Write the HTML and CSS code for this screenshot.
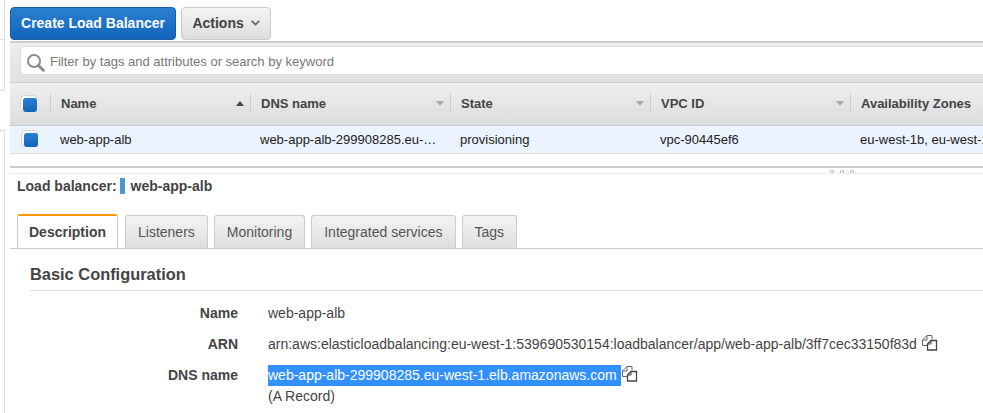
FILE: index.html
```html
<!DOCTYPE html>
<html lang="en">
<head>
<meta charset="utf-8">
<title>Load Balancers</title>
<link rel="stylesheet" href="styles.css">
</head>
<body>
<div class="page">
  <aside class="rail">
    <div class="rail-a"></div>
    <div class="rail-b"></div>
    <div class="rail-gap"></div>
    <div class="rail-c"></div>
  </aside>
  <main class="main">
    <div class="toolbar">
      <button class="btn btn-primary">Create Load Balancer</button>
      <button class="btn btn-default">Actions
        <svg class="chev" width="9" height="6" viewBox="0 0 9 6"><path d="M.7 .8 4.5 4.6 8.3 .8" fill="none" stroke="#666" stroke-width="1.7"/></svg>
      </button>
    </div>
    <div class="filterbar">
      <div class="filter">
        <svg class="search" width="18" height="18" viewBox="0 0 18 18"><circle cx="7" cy="7" r="6" fill="none" stroke="#8c8c8c" stroke-width="2"/><path d="M11.5 11.5 16.3 16.3" stroke="#8c8c8c" stroke-width="3" stroke-linecap="round"/></svg>
        <span>Filter by tags and attributes or search by keyword</span>
      </div>
    </div>
    <div class="grid head">
      <div class="chk-cell"><span class="chk"></span></div>
      <div class="th"><span>Name</span><i class="arrow up"></i></div>
      <div class="th"><span>DNS name</span><i class="arrow"></i></div>
      <div class="th"><span>State</span><i class="arrow"></i></div>
      <div class="th"><span>VPC ID</span><i class="arrow"></i></div>
      <div class="th"><span>Availability Zones</span></div>
    </div>
    <div class="grid row">
      <div class="chk-cell"><span class="chk chk-row"></span></div>
      <div class="td">web-app-alb</div>
      <div class="td">web-app-alb-299908285.eu-…</div>
      <div class="td">provisioning</div>
      <div class="td">vpc-90445ef6</div>
      <div class="td">eu-west-1b, eu-west-1a</div>
    </div>
    <div class="splitter"><div class="dots"><i></i><i></i><i></i></div></div>
    <div class="lb-title">Load balancer: <i class="swatch"></i> <span>web-app-alb</span></div>
    <div class="tabs">
      <div class="tab active">Description</div>
      <div class="tab">Listeners</div>
      <div class="tab">Monitoring</div>
      <div class="tab">Integrated services</div>
      <div class="tab">Tags</div>
    </div>
    <section class="details">
      <h2>Basic Configuration</h2>
      <dl>
        <dt>Name</dt>
        <dd>web-app-alb</dd>
        <dt>ARN</dt>
        <dd>arn:aws:elasticloadbalancing:eu-west-1:539690530154:loadbalancer/app/web-app-alb/3ff7cec33150f83d <svg class="copy" width="17" height="17" viewBox="0 0 17 17"><use href="#copy-icon"/></svg></dd>
        <dt>DNS name</dt>
        <dd><span class="sel">web-app-alb-299908285.eu-west-1.elb.amazonaws.com </span><svg class="copy" width="17" height="17" viewBox="0 0 17 17"><use href="#copy-icon"/></svg><br>(A Record)</dd>
      </dl>
    </section>
  </main>
</div>
<svg class="defs" width="0" height="0"><defs><g id="copy-icon" fill="none"><path d="M7.5 11.5H1.5V6L6 1.5H11V5.5" stroke="#666"/><path d="M6 1.5V6H1.5" stroke="#666"/><path d="M10 6.5H15.5V16H6.5V10Z" fill="#fff" stroke="#444" stroke-width="1.3"/><path d="M10 6.5V10H6.5" stroke="#444"/></g></defs></svg>
</body>
</html>
```
FILE: styles.css
```css
* { box-sizing: border-box; }
html, body { margin: 0; height: 413px; overflow: hidden; background: #fff; }
body { font-family: "Liberation Sans", Arial, sans-serif; font-size: 13px; color: #444; }
.page { display: flex; width: 983px; height: 413px; overflow: hidden; }
.rail { flex: 0 0 10px; width: 10px; }
.rail-a { height: 40px; width: 5px; border-right: 1px solid #ddd; border-bottom: 1px solid #ddd; }
.rail-b { height: 51px; width: 5px; border-right: 1px solid #ddd; border-bottom: 1px solid #ddd; }
.rail-gap { height: 39px; }
.rail-c { height: 283px; width: 5px; border-right: 1px solid #ddd; border-top: 1px solid #ddd; }
.main { flex: 1 1 auto; min-width: 0; }

.toolbar { display: flex; gap: 5px; height: 41px; padding-top: 7px; }
.btn { height: 33px; padding: 0 0 2px; font: bold 14px "Liberation Sans", Arial, sans-serif; border-radius: 4px; }
.btn-primary { width: 166px; color: #fff; background: linear-gradient(#2a7fd3, #1166bb); border: 1px solid #1a5da3; }
.btn-default { width: 90px; color: #444; background: linear-gradient(#f3f3f3, #dedede); border: 1px solid #ccc; }
.chev { margin-left: 3px; vertical-align: 2px; }

.filterbar { height: 42px; padding: 3px 0 8px 10px; background: linear-gradient(#eee, #e0e0e0); border-top: 2px solid #ccc; border-bottom: 1px solid #ccc; }
.filter { height: 29px; display: flex; align-items: center; gap: 5px; padding: 1px 0 0 6px; background: #fff; border: 1px solid #ddd; border-right: 0; border-radius: 4px 0 0 4px; color: #777; font-size: 13px; }
.search { margin-top: 3px; }

.grid { display: grid; grid-template-columns: 40px 200px 200px 200px 200px 1fr; }
.head { height: 43px; align-items: center; padding-bottom: 2px; background: linear-gradient(#efefef, #dcdcdc); border-bottom: 1px solid #ccc; }
.row { height: 28px; align-items: center; background: #eaf3fe; border-bottom: 1px solid #ddd; color: #222; }
.chk-cell { padding-left: 10px; display: flex; }
.chk { display: block; width: 17px; height: 17px; padding: 1px; border: 1px solid #d4d4d4; border-radius: 4px; background: #f8f8f8; }
.chk::before { content: ""; display: block; width: 14px; height: 14px; margin: 1px 0 0 1px; border-radius: 3px; background: linear-gradient(#2a7fd3, #1166bb); }
.chk-row { margin: 0 0 2px 1px; }
.th { height: 18px; display: flex; align-items: center; justify-content: space-between; padding: 0 6px 0 10px; border-left: 1px solid #ccc; font-weight: bold; font-size: 13px; color: #444; }
.td { padding-left: 10px; font-size: 13px; white-space: nowrap; }
.arrow { width: 0; height: 0; border: 4px solid transparent; border-top: 5px solid #aaa; border-bottom: 0; }
.arrow.up { border-top: 0; border-bottom: 5px solid #444; }

.splitter { position: relative; height: 12px; margin-top: 12px; border-top: 2px solid #ccc; }
.splitter::after { content: ""; position: absolute; left: 0; right: 0; top: 5px; border-top: 1px solid #eee; }
.dots { position: absolute; left: 820px; top: 2px; display: flex; gap: 6px; z-index: 1; }
.dots i { width: 4px; height: 3px; border: 1px solid #bbb; border-bottom: 0; border-radius: 2px 2px 0 0; background: #eee; }

.lb-title { display: flex; align-items: center; height: 16px; padding-left: 7px; font-size: 14px; font-weight: bold; }
.swatch { width: 5px; height: 16px; margin: 0 6px 0 3px; background: #4f96d3; }

.tabs { display: flex; gap: 6px; height: 55px; padding: 21px 0 0 7px; border-bottom: 1px solid #ccc; }
.tab { height: 33px; padding: 8px 12px 0; font-size: 14px; color: #555; border: 1px solid #ccc; border-bottom: 0; border-radius: 3px 3px 0 0; background: linear-gradient(#f3f3f3, #dedede); }
.tab.active { height: 34px; margin: -1px 1px -1px 0; padding: 8px 11px 0; font-weight: bold; color: #444; background: #fff; border-top: 2px solid #f90; }

.details { margin-left: 20px; }
.details h2 { margin: 0; height: 42px; padding-top: 16px; font-size: 16.4px; line-height: 18px; color: #444; border-bottom: 1px solid #ddd; }
dl { display: grid; grid-template-columns: 208px 1fr; column-gap: 30px; row-gap: 13px; margin: 13px 0 0; font-size: 14px; }
dt { text-align: right; font-weight: bold; line-height: 18px; }
dd { margin: 0; line-height: 18px; white-space: nowrap; }
.sel { display: inline-block; margin: -1px 0 1px; background: #3390ff; color: #fff; line-height: 21px; white-space: pre; }
.copy { margin: -3px 0; vertical-align: 1px; }
.defs { position: absolute; }
```
